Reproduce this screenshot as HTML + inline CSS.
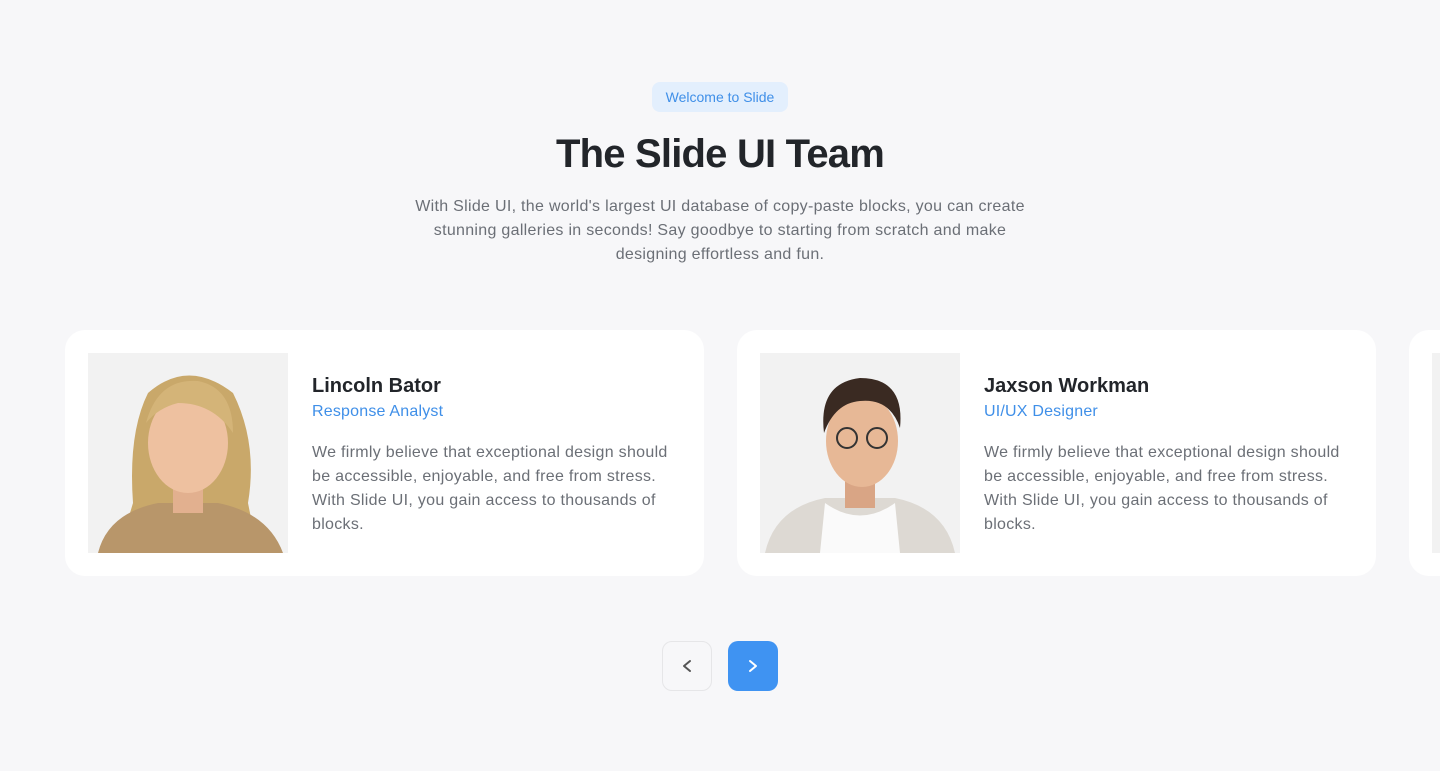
<!DOCTYPE html>
<html><head><style>
body{margin:0;width:1440px;height:771px;background:#f7f7f9;font-family:"Liberation Sans",sans-serif;position:relative;overflow:hidden}
.badge{position:absolute;left:652px;top:82px;width:136px;height:30px;border-radius:8px;background:#e3effd;color:#3f8fe8;font-size:14px;line-height:30px;text-align:center}
h1{position:absolute;left:0;width:1440px;top:132px;margin:0;text-align:center;font-size:40px;font-weight:600;color:#22252a;letter-spacing:-0.8px}
.sub{position:absolute;left:380px;width:680px;top:195px;text-align:center;font-size:16px;line-height:24px;color:#6b6f76;letter-spacing:0.3px}
.card{position:absolute;top:330px;width:639px;height:246px;background:#fff;border-radius:20px}
.img{position:absolute;left:23px;top:23px;width:200px;height:200px;background:#f2f2f2;overflow:hidden}
.name{position:absolute;left:247px;top:45px;font-size:20px;font-weight:600;color:#22252a}
.role{position:absolute;left:247px;top:73px;font-size:16px;color:#3f8fe8;letter-spacing:0.2px}
.txt{position:absolute;left:247px;top:111px;width:380px;font-size:16px;line-height:24px;color:#6b6f76;letter-spacing:0.3px}
.btn{position:absolute;top:641px;width:50px;height:50px;border-radius:10px;box-sizing:border-box}
</style></head><body>
<div class="badge">Welcome to Slide</div>
<h1>The Slide UI Team</h1>
<div class="sub">With Slide UI, the world's largest UI database of copy-paste blocks, you can create<br>stunning galleries in seconds! Say goodbye to starting from scratch and make<br>designing effortless and fun.</div>

<div class="card" style="left:65px">
<div class="img"><svg width="200" height="200">
<path d="M60 40 Q100 5 145 40 Q170 90 160 150 L170 200 L30 200 L45 150 Q40 80 60 40Z" fill="#c9a86a"/>
<path d="M10 200 Q20 160 70 150 L130 150 Q180 160 195 200Z" fill="#b8966a"/>
<rect x="85" y="120" width="30" height="40" fill="#e2b08f"/>
<ellipse cx="100" cy="90" rx="40" ry="50" fill="#eec1a0"/>
<path d="M58 70 Q70 25 110 28 Q145 35 145 80 Q125 50 90 50 Q70 55 58 70Z" fill="#d4b478"/>
</svg></div>
<div class="name">Lincoln Bator</div><div class="role">Response Analyst</div>
<div class="txt">We firmly believe that exceptional design should<br>be accessible, enjoyable, and free from stress.<br>With Slide UI, you gain access to thousands of<br>blocks.</div></div>

<div class="card" style="left:737px">
<div class="img"><svg width="200" height="200">
<path d="M5 200 Q15 155 65 145 L135 145 Q185 155 195 200Z" fill="#ddd9d3"/>
<path d="M65 150 Q100 175 135 150 L140 200 L60 200Z" fill="#fafafa"/>
<rect x="85" y="115" width="30" height="40" fill="#d9a585"/>
<ellipse cx="102" cy="88" rx="36" ry="46" fill="#e7b896"/>
<path d="M64 80 Q58 30 100 25 Q145 25 140 75 Q130 45 100 48 Q75 50 64 80Z" fill="#3a2a22"/>
<circle cx="87" cy="85" r="10" fill="none" stroke="#333" stroke-width="2"/><circle cx="117" cy="85" r="10" fill="none" stroke="#333" stroke-width="2"/>
</svg></div>
<div class="name">Jaxson Workman</div><div class="role">UI/UX Designer</div>
<div class="txt">We firmly believe that exceptional design should<br>be accessible, enjoyable, and free from stress.<br>With Slide UI, you gain access to thousands of<br>blocks.</div></div>

<div class="card" style="left:1409px"><div class="img"></div></div>

<div class="btn" style="left:662px;border:1px solid #e6e6e8;background:#f7f7f9"><svg width="48" height="48"><path d="M27 19 L21 24 L27 29" fill="none" stroke="#555" stroke-width="2" stroke-linecap="round" stroke-linejoin="round"/></svg></div>
<div class="btn" style="left:728px;background:#3f93f2"><svg width="50" height="50"><path d="M22 20 L28 25 L22 30" fill="none" stroke="#fff" stroke-width="2" stroke-linecap="round" stroke-linejoin="round"/></svg></div>
</body></html>
